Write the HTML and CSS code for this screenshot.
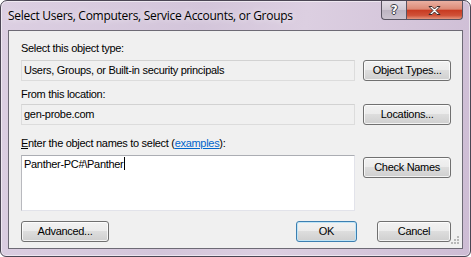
FILE: index.html
```html
<!DOCTYPE html>
<html>
<head>
<meta charset="utf-8">
<link rel="stylesheet" href="styles.css">
</head>
<body>
<div class="window">
  <div class="titlebar">
    <div class="title">Select Users, Computers, Service Accounts, or Groups</div>
    <div class="caption">
      <div class="cap help"><span class="glyph">?</span></div>
      <div class="cap close">
        <svg width="15" height="11" viewBox="0 0 15 11"><path d="M2 1.5h3l2.5 2.5 2.5-2.5h3l-4 4 4 4h-3l-2.5-2.5-2.5 2.5h-3l4-4z" fill="#fff" stroke="#3a2a2a" stroke-width="1" stroke-linejoin="round"/></svg>
      </div>
    </div>
  </div>
  <div class="client">
    <div class="label l1">Select this object type:</div>
    <div class="row">
      <div class="field">Users, Groups, or Built-in security principals</div>
      <div class="btn">Object Types...</div>
    </div>
    <div class="label l2">From this location:</div>
    <div class="row">
      <div class="field">gen-probe.com</div>
      <div class="btn">Locations...</div>
    </div>
    <div class="label l3"><u>E</u>nter the object names to select (<a class="link">examples</a>):</div>
    <div class="row top">
      <div class="textarea">Panther-PC#\Panther<span class="caret"></span></div>
      <div class="btn chk">Check Names</div>
    </div>
    <div class="row bottom">
      <div class="btn adv">Advanced...</div>
      <div class="spacer"></div>
      <div class="btn ok">OK</div>
      <div class="btn cancel">Cancel</div>
    </div>
    <svg class="grip" width="9" height="9" viewBox="0 0 9 9">
      <g fill="#b8b8b8">
        <rect x="6" y="0" width="2" height="2"/>
        <rect x="3" y="3" width="2" height="2"/><rect x="6" y="3" width="2" height="2"/>
        <rect x="0" y="6" width="2" height="2"/><rect x="3" y="6" width="2" height="2"/><rect x="6" y="6" width="2" height="2"/>
      </g>
    </svg>
  </div>
</div>
</body>
</html>
```
FILE: styles.css
```css
html, body { margin: 0; padding: 0; background: #fff; }
.window {
  width: 471px; height: 257px; box-sizing: border-box;
  border: 1px solid #4b4654;
  border-radius: 7px 7px 6px 6px;
  background: linear-gradient(100deg, #dccfe2 0%, #d3c5da 40%, #dccfe1 60%, #cdbcd4 100%);
  box-shadow: inset 0 0 0 1px rgba(255,255,255,0.55);
  display: flex; flex-direction: column;
  overflow: hidden;
  font-family: "Liberation Sans", Arial, sans-serif;
  font-size: 11px; color: #000; letter-spacing: -0.3px;
}
.titlebar { height: 29px; display: flex; align-items: flex-start; flex: none; }
.title {
  font-family: "Open Sans", "Noto Sans", sans-serif; font-size: 12px;
  padding: 6px 0 0 7px; letter-spacing: -0.28px;
  text-shadow: 0 0 6px rgba(255,255,255,0.9);
}
.caption { margin-left: auto; margin-right: 7px; display: flex; height: 19px; }
.cap {
  height: 18px; border: 1px solid #595462; border-top: none;
  display: flex; align-items: center; justify-content: center;
}
.help {
  width: 24px; border-radius: 0 0 0 4px; border-right: none;
  background: linear-gradient(#e3dde6, #cfc8d3 50%, #bdb4c2 51%, #cbc3cf);
}
.glyph {
  font-family: "DejaVu Sans", sans-serif; font-weight: bold; font-size: 12px; color: #fff;
  text-shadow: 1px 0 0 #3b3b45, -1px 0 0 #3b3b45, 0 1px 0 #3b3b45, 0 -1px 0 #3b3b45;
}
.close {
  width: 55px; border-radius: 0 0 4px 0;
  background: linear-gradient(#eab0a2, #dc8a76 45%, #c83b22 52%, #d05138 80%, #e5957d);
}
.client {
  flex: 1; margin: 0 7px 7px 7px;
  border: 1px solid #6d6a75;
  background: #f0f0f0;
  padding: 10px 11px 0 12px;
  position: relative;
  display: flex; flex-direction: column;
}
.label { height: 13px; line-height: 13px; }
.l1 { margin-top: 1px; }
.l2 { margin-top: 7px; }
.l3 { margin-top: 12px; }
.row { display: flex; align-items: center; gap: 8px; }
.row.top { align-items: flex-start; margin-top: 5px; }
.l1 + .row { margin-top: 5px; }
.l2 + .row { margin-top: 3px; }
.field {
  width: 335px; height: 21px; box-sizing: border-box;
  border: 1px solid #dcdcdc; border-top-color: #d2d2d2;
  padding: 0 2px; line-height: 19px;
}
.btn {
  width: 88px; height: 21px; box-sizing: border-box;
  border: 1px solid #707070; border-radius: 3px;
  background: linear-gradient(#f2f2f2, #ebebeb 49%, #dddddd 50%, #cfcfcf);
  box-shadow: inset 0 0 0 1px rgba(255,255,255,0.75);
  text-align: center; line-height: 19px;
}
.textarea {
  width: 335px; height: 56px; box-sizing: border-box;
  background: #fff;
  border: 1px solid #e2e3ea; border-top-color: #abadb3; border-left-color: #b8b9be;
  padding: 1px 2px; line-height: 14px;
}
.caret { display: inline-block; width: 1px; height: 13px; background: #000; vertical-align: -2px; margin-left: 1px; }
.chk { margin-top: 2px; }
.row.bottom { margin-top: 10px; gap: 0; }
.spacer { flex: 1; }
.adv { width: 88px; }
.ok {
  width: 61px; margin-right: 20px;
  border-color: #3c7fb1;
  box-shadow: inset 0 0 0 1px #bfe4f6;
}
.cancel { width: 74px; }
.link { color: #0066cc; text-decoration: underline; }
.grip { position: absolute; right: 2px; bottom: 3px; }
```
